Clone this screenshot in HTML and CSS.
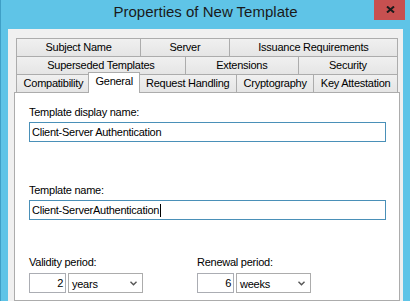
FILE: index.html
```html
<!DOCTYPE html>
<html lang="en">
<head>
    <meta charset="UTF-8">
    <meta name="viewport" content="width=device-width, initial-scale=1.0">
    <title>Properties of New Template</title>
    <link rel="stylesheet" href="styles.css">
</head>
<body>

    <div class="window">
        <div class="titlebar">
            <div></div>
            <div class="title">Properties of New Template</div>
            <div class="controls">
                <div class="close">
                    <svg width="9" height="7" viewBox="0 0 9 7">
                        <path d="M1 0.5 L8 6.5 M8 0.5 L1 6.5" stroke="#1b1b1b" stroke-width="2" fill="none"/>
                    </svg>
                </div>
            </div>
        </div>

        <div class="dialog">
            <div class="tabs">
                <div class="tab-row">
                    <div class="tab">Subject Name</div>
                    <div class="tab">Server</div>
                    <div class="tab">Issuance Requirements</div>
                </div>
                <div class="tab-row">
                    <div class="tab">Superseded Templates</div>
                    <div class="tab">Extensions</div>
                    <div class="tab">Security</div>
                </div>
                <div class="tab-row">
                    <div class="tab">Compatibility</div>
                    <div class="tab active">General</div>
                    <div class="tab">Request Handling</div>
                    <div class="tab">Cryptography</div>
                    <div class="tab">Key Attestation</div>
                </div>
            </div>

            <div class="panel">
                <div class="field">
                    <div class="label">Template display name:</div>
                    <div class="textbox">Client-Server Authentication</div>
                </div>
                <div class="field">
                    <div class="label">Template name:</div>
                    <div class="textbox">Client-ServerAuthentication<span class="caret"></span></div>
                </div>
                <div class="periods">
                    <div class="period">
                        <div class="label">Validity period:</div>
                        <div class="period-inputs">
                            <div class="number">2</div>
                            <div class="select">
                                <span>years</span>
                                <svg width="7" height="5" viewBox="0 0 7 5">
                                    <path d="M0.5 0.8 L3.5 3.8 L6.5 0.8" stroke="#555" stroke-width="1.4" fill="none"/>
                                </svg>
                            </div>
                        </div>
                    </div>
                    <div class="period">
                        <div class="label">Renewal period:</div>
                        <div class="period-inputs">
                            <div class="number">6</div>
                            <div class="select">
                                <span>weeks</span>
                                <svg width="7" height="5" viewBox="0 0 7 5">
                                    <path d="M0.5 0.8 L3.5 3.8 L6.5 0.8" stroke="#555" stroke-width="1.4" fill="none"/>
                                </svg>
                            </div>
                        </div>
                    </div>
                </div>
            </div>
        </div>
    </div>

</body>
</html>
```

FILE: styles.css
```css
* {
    box-sizing: border-box;
}

body {
    margin: 0;
    background-color: #5fc4e7;
    font-family: "Liberation Sans", Arial, sans-serif;
    font-size: 11px;
    letter-spacing: -0.25px;
    color: #000;
}

.window {
    width: 410px;
    height: 301px;
    overflow: hidden;
    border-left: 1px solid #3f9fc6;
    display: flex;
    flex-direction: column;
}

/* title bar */
.titlebar {
    height: 29px;
    flex: none;
    display: grid;
    grid-template-columns: 1fr auto 1fr;
    align-items: start;
}

.title {
    font-size: 15px;
    letter-spacing: 0;
    line-height: 24px;
    color: #1a1a1a;
}

.controls {
    display: flex;
    justify-content: flex-end;
    padding-right: 5px;
}

.close {
    width: 31px;
    height: 20px;
    background-color: #c75050;
    display: flex;
    align-items: center;
    justify-content: center;
    padding: 0 0 1px 2px;
}

.close svg {
    display: block;
}

/* dialog body */
.dialog {
    flex: 1;
    margin: 0 7px;
    background-color: #f0f0f0;
    padding: 9px 3px 0 6px;
    display: flex;
    flex-direction: column;
}

.tabs {
    margin: 0 2px;
}

.tab-row {
    display: flex;
    height: 18px;
}

.tab {
    flex: 1 1 auto;
    padding: 0 5px;
    border: 1px solid #acacac;
    border-right: none;
    border-bottom: none;
    background: linear-gradient(#f0f0f0, #e5e5e5);
    text-align: center;
    line-height: 17px;
    white-space: nowrap;
}

.tab:last-child {
    border-right: 1px solid #acacac;
}

.tab.active {
    position: relative;
    z-index: 1;
    height: 21px;
    margin: -2px -2px -1px;
    border-right: 1px solid #acacac;
    background: #fff;
}

.panel {
    flex: 1;
    background-color: #fff;
    border: 1px solid #acacac;
    padding: 13px 13px 0 14px;
}

.label {
    line-height: 13px;
}

.textbox {
    margin-top: 3px;
    height: 20px;
    border: 1px solid #4a90b8;
    padding: 0 2px;
    line-height: 18px;
    white-space: nowrap;
}

.field + .field {
    margin-top: 42px;
}

.caret {
    display: inline-block;
    width: 1px;
    height: 13px;
    margin-left: 1px;
    background-color: #000;
    vertical-align: -3px;
}

.periods {
    margin-top: 36px;
    display: grid;
    grid-template-columns: 168px 1fr;
}

.period-inputs {
    margin-top: 4px;
    display: flex;
    gap: 2px;
}

.number {
    width: 37px;
    height: 20px;
    border: 1px solid #abadb3;
    padding-right: 2px;
    text-align: right;
    line-height: 18px;
}

.select {
    width: 75px;
    height: 20px;
    border: 1px solid #acacac;
    padding: 1px 5px 0 3px;
    display: flex;
    align-items: center;
    justify-content: space-between;
}
```
